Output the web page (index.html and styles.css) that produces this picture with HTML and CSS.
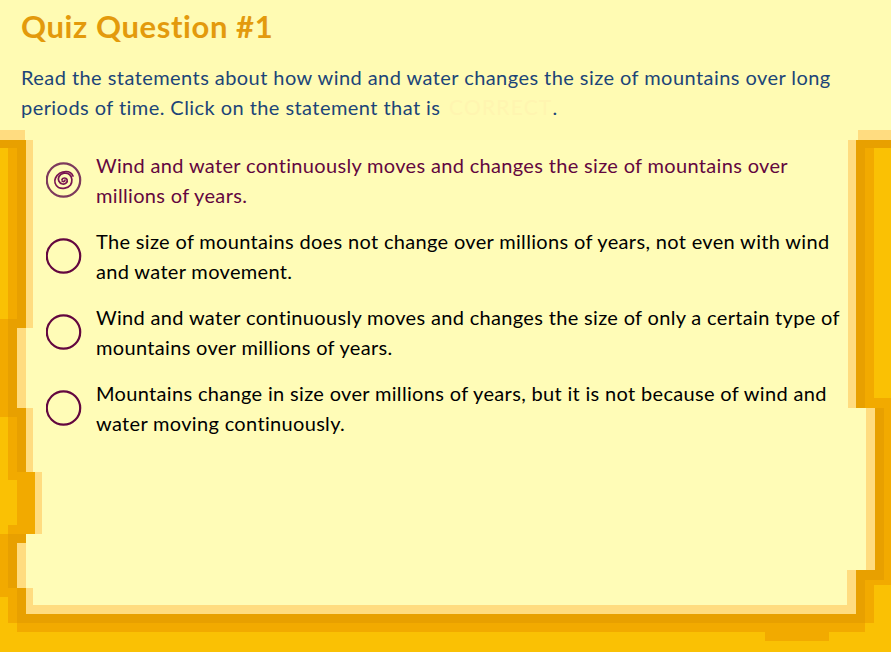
FILE: index.html
```html
<!DOCTYPE html>
<html lang="en">
<head>
<meta charset="utf-8">
<title>Quiz Question #1</title>
<link rel="stylesheet" href="styles.css">
</head>
<body>
<svg class="frame" width="891" height="652" viewBox="0 0 891 652" aria-hidden="true">
  <rect class="c-yellow" x="0" y="148" width="891" height="504"/>
  <polygon class="c-mid" points="8,140 874,140 874,398 891,398 891,585 874,585 874,623 865,623 865,632 829,632 829,641 765,641 765,632 17,632 17,623 8,623 8,597 0,597 0,534 8,534 8,525 17,525 17,480 8,480 8,417 0,417 0,319 8,319"/>
  <polygon class="c-dark" points="17,140 865,140 865,408 884,408 884,580 865,580 865,623 17,623 17,588 8,588 8,534 26,534 35,534 35,472 17,472 17,417 8,417 8,319 17,319"/>
  <rect class="c-dark" x="0" y="140" width="26" height="8"/>
  <rect class="c-dark" x="856" y="140" width="35" height="8"/>
  <rect class="c-light" x="0" y="130" width="25" height="10"/>
  <rect class="c-light" x="858" y="130" width="33" height="10"/>
  <polygon class="c-light" points="26,140 856,140 856,408 875,408 875,570 856,570 856,614 26,614 26,588 17,588 17,543 26,543 26,534 35,534 35,472 26,472 26,408 17,408 17,328 26,328"/>
  <polygon class="c-light" points="35,472 42,472 42,534 35,534"/>
  <polygon class="c-cream" points="33,140 848,140 848,408 866,408 866,570 847,570 847,605 33,605 33,588 26,588 26,534 42,534 42,472 33,472 33,408 26,408 26,328 33,328"/>
</svg>
<main class="quiz">
  <h1 class="title">Quiz Question #1</h1>
  <p class="prompt">Read the statements about how wind and water changes the size of mountains over long periods of time. Click on the statement that is <span class="hidden-word">CORRECT</span>.</p>
  <ul class="options">
    <li class="option selected">
      <svg class="radio" width="36" height="36" viewBox="0 0 36 36" aria-hidden="true">
        <circle class="ring" cx="17.5" cy="18" r="16.7"/>
        <path class="spiral" d="M16 17.5C17 15.5 20 15.5 21 17.5C22 20 19.5 22.5 16.5 22C13 21.5 11.5 17.5 13 14.5C15 11 20.5 10 23.5 12.5C26.5 15 26.5 20 24.5 23C22 26.5 16 27 12.5 25.5C9 23.5 8 19 9.5 16C11.5 12 15.5 9.5 20 9.5C23 9.5 26 11.5 27 14M16 19C17 20 19 19.5 19 18"/>
      </svg>
      <span class="option-text">Wind and water continuously moves and changes the size of mountains over millions of years.</span>
    </li>
    <li class="option">
      <svg class="radio" width="36" height="36" viewBox="0 0 36 36" aria-hidden="true"><circle class="ring" cx="17.5" cy="18" r="16.7"/></svg>
      <span class="option-text">The size of mountains does not change over millions of years, not even with wind and water movement.</span>
    </li>
    <li class="option">
      <svg class="radio" width="36" height="36" viewBox="0 0 36 36" aria-hidden="true"><circle class="ring" cx="17.5" cy="18" r="16.7"/></svg>
      <span class="option-text">Wind and water continuously moves and changes the size of only a certain type of mountains over millions of years.</span>
    </li>
    <li class="option">
      <svg class="radio" width="36" height="36" viewBox="0 0 36 36" aria-hidden="true"><circle class="ring" cx="17.5" cy="18" r="16.7"/></svg>
      <span class="option-text">Mountains change in size over millions of years, but it is not because of wind and water moving continuously.</span>
    </li>
  </ul>
</main>
</body>
</html>
```
FILE: styles.css
```css
html, body {
  margin: 0;
  padding: 0;
  width: 891px;
  height: 652px;
  overflow: hidden;
  background: #fffbb3;
}
body {
  position: relative;
  font-family: Lato, "Noto Sans", sans-serif;
}
.frame {
  position: absolute;
  left: 0;
  top: 0;
  display: block;
}
.c-yellow { fill: #fac104; }
.c-mid { fill: #f2aa00; }
.c-dark { fill: #e8a000; }
.c-light { fill: #ffdc80; }
.c-cream { fill: #fffcb7; }
.quiz {
  position: relative;
  padding: 6px 40px 0 21px;
}
.title {
  margin: 0;
  font-size: 31px;
  line-height: 40px;
  font-weight: 700;
  color: #e39a0c;
  letter-spacing: 0.6px;
}
.prompt {
  margin: 16px 0 0;
  font-size: 20px;
  line-height: 30px;
  color: #1c4578;
  letter-spacing: 0.44px;
}
.hidden-word {
  color: #fff5b0;
  font-size: 21px;
  letter-spacing: 1.2px;
  margin-left: 3px;
}
.options {
  list-style: none;
  margin: 28px 0 0;
  padding: 0 0 0 25px;
}
.option {
  display: flex;
  align-items: center;
  gap: 14px;
  height: 60px;
  margin-bottom: 16px;
  font-size: 20px;
  line-height: 30px;
  letter-spacing: 0.33px;
  color: #000;
}
.option.selected { color: #63073f; }
.radio { flex: none; display: block; }
.ring {
  fill: none;
  stroke: #63073f;
  stroke-width: 2.2;
}
.selected .ring { stroke: #7d3a5c; }
.spiral {
  fill: none;
  stroke: #7a1450;
  stroke-width: 1.7;
  stroke-linecap: round;
}
```
